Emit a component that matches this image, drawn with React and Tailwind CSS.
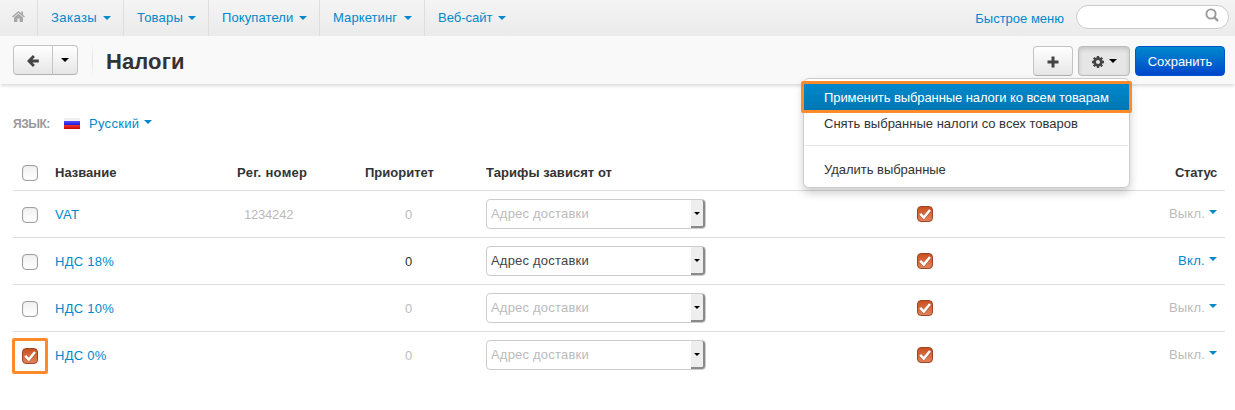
import React from "react";

const Caret = ({ className = "" }) => (
  <span className={`inline-block h-0 w-0 border-x-4 border-t-4 border-x-transparent ${className}`} />
);

const Check = ({ checked }) =>
  checked ? (
    <span className="flex h-4 w-4 items-center justify-center rounded-[4px] border border-[#9c4423] bg-gradient-to-b from-[#c9501f] to-[#e28259]">
      <svg viewBox="0 0 14 14" className="h-[14px] w-[14px]">
        <path d="M2.2 7.6 L5.8 11.4 L12 4" fill="none" stroke="#7c3517" strokeOpacity=".5" strokeWidth="2.3" />
        <path d="M2.2 6.9 L5.8 10.6 L12 3" fill="none" stroke="#fff" strokeWidth="2.5" />
      </svg>
    </span>
  ) : (
    <span className="block h-4 w-4 rounded-[4px] border border-[#a0a0a0] bg-gradient-to-b from-[#f1f1f1] to-white shadow-[inset_0_0_1px_rgba(0,0,0,0.3)]" />
  );

const nav = [
  ["Заказы", "w-[86px]", "tracking-[0.45px]"],
  ["Товары", "w-[85px]", "tracking-[0.2px]"],
  ["Покупатели", "w-[111px]", "tracking-[0.1px]"],
  ["Маркетинг", "w-[105px]", "tracking-[0.1px]"],
];

const rows = [
  { name: "VAT", reg: "1234242", off: true },
  { name: "НДС 18%", reg: "", off: false },
  { name: "НДС 10%", reg: "", off: true },
  { name: "НДС 0%", reg: "", off: true, checked: true },
];

const cols = "grid grid-cols-[42px_157px_120px_150px_265px_366px_1fr]";
const button = "flex items-center border border-[#c4c4c4] border-b-[#b0b0b0] bg-gradient-to-b from-white to-[#e6e6e6]";

export default function App() {
  return (
    <div className="relative h-[410px] w-[1235px] overflow-hidden bg-white font-['Liberation_Sans',Arial,sans-serif] text-[13px] leading-[18px] text-[#333]">
      <nav className="flex h-9 bg-gradient-to-b from-[#f4f4f4] to-[#ebebeb] text-[#0088cc]">
        <div className="flex w-[38px] border-r border-[#dedede] pl-3 pt-[11px]">
          <svg viewBox="0 0 13 11" className="h-[11px] w-[13px]" fill="#a7a7a7">
            <path d="M6.5 2.8 L11 6.5 V11 H7.6 V7.6 H5.4 V11 H2 V6.5Z" />
            <path d="M0.5 6 L6.5 1 L12.5 6" fill="none" stroke="#a7a7a7" strokeWidth="1.5" />
            <path d="M9.2 .6 H11 V5 L9.2 3.5Z" />
          </svg>
        </div>
        {nav.map(([label, w, ls]) => (
          <div key={label} className={`flex items-center justify-between border-r border-[#dedede] pl-[13px] pr-3 ${w}`}>
            <span className={ls}>{label}</span>
            <Caret className="border-t-[#0088cc]" />
          </div>
        ))}
        <div className="flex items-center pl-[13px]">
          <span className="w-[60px]">Веб-сайт</span>
          <Caret className="border-t-[#0088cc]" />
        </div>
        <div className="ml-auto flex pr-[6px] pt-[5px]">
          <span className="mr-3 pt-[5px]">Быстрое меню</span>
          <span className="flex h-6 w-[153px] justify-end rounded-full border border-[#ccc] bg-white pr-[9px] pt-[2px]">
            <svg viewBox="0 0 14 14" className="h-[14px] w-[14px]" fill="none" stroke="#999" strokeWidth="1.9">
              <circle cx="6" cy="6" r="4.6" />
              <path d="M9.4 9.4 L13 13" strokeWidth="2.3" />
            </svg>
          </span>
        </div>
      </nav>

      <header className="flex h-12 bg-[#f9f9f9] pl-[13px] pr-[10px] shadow-[0_3px_3px_-1px_rgba(0,0,0,0.15)]">
        <div className="mt-[9px] flex h-[30px]">
          <span className={`${button} w-10 justify-center rounded-l-[4px] pt-[2px]`}>
            <svg viewBox="0 0 12 12" className="h-3 w-3" fill="none" stroke="#444" strokeWidth="2.8">
              <path d="M11.8 6 H2.5 M6.9 1.1 L2 6 L6.9 10.9" />
            </svg>
          </span>
          <span className={`${button} -ml-px w-[26px] justify-center rounded-r-[4px]`}>
            <Caret className="border-t-black" />
          </span>
        </div>
        <span className="ml-[14px] mt-2 h-8 w-px bg-gradient-to-b from-[#f9f9f9] via-[#e2e2e2] to-[#f9f9f9]" />
        <h1 className="ml-[13px] mt-[11px] text-[22px] font-bold leading-[30px] tracking-[0.1px]">Налоги</h1>
        <div className="ml-auto mt-[10px] flex h-[30px] gap-[5px]">
          <span className={`${button} w-10 justify-center rounded-[4px]`}>
            <svg viewBox="0 0 12 12" className="mt-px h-3 w-3" stroke="#444" strokeWidth="3">
              <path d="M6 .5 V11.5 M.5 6 H11.5" />
            </svg>
          </span>
          <span className="flex w-[52px] items-center justify-center gap-[5px] rounded-[4px] border border-[#bbb] bg-[#e6e6e6] shadow-[inset_0_2px_4px_rgba(0,0,0,0.15)]">
            <svg viewBox="0 0 12 12" className="mt-0.5 h-3 w-3" fill="none" stroke="#444">
              <circle cx="6" cy="6" r="3.4" strokeWidth="2.7" />
              <path d="M6 0V2.5M6 9.5V12M0 6H2.5M9.5 6H12M1.8 1.8L3.4 3.4M8.6 8.6L10.2 10.2M10.2 1.8L8.6 3.4M3.4 8.6L1.8 10.2" strokeWidth="2.3" />
            </svg>
            <Caret className="border-t-black" />
          </span>
          <span className="flex w-[90px] items-center justify-center rounded-[4px] border border-[#0055cc] bg-gradient-to-b from-[#0088cc] to-[#0044cc] pt-0.5 text-white">
            Сохранить
          </span>
        </div>
      </header>

      <main className="px-[13px] pr-[10px]">
        <div className="flex h-[70px] items-center pt-[9px]">
          <span className="w-[51px] text-[12px] font-bold tracking-[-0.5px] text-[#999]">ЯЗЫК:</span>
          <span className="h-[11px] w-4 bg-[linear-gradient(#f0f0f0_0_3px,#5550ff_3px,#2018d8_7px,#f03838_7px,#cc0000)]" />
          <span className="ml-[9px] w-[55px] tracking-[0.3px] text-[#0088cc]">Русский</span>
          <Caret className="mb-[3px] border-t-[#0088cc]" />
        </div>

        <div className={`${cols} h-[37px] border-b border-[#ddd] font-bold`}>
          <span className="pl-[9px] pt-[11px]"><Check /></span>
          <span className="pt-[10px]">Название</span>
          <span className="whitespace-nowrap pl-[25px] pt-[10px] tracking-[0.3px]">Рег. номер</span>
          <span className="pl-[33px] pt-[10px]">Приоритет</span>
          <span className="pl-1 pt-[10px] tracking-[0.05px]">Тарифы зависят от</span>
          <span />
          <span className="pr-2 pt-[10px] text-right tracking-[-0.3px]">Статус</span>
        </div>

        {rows.map((r, i) => (
          <div key={r.name} className={`${cols} h-[47px] ${i < 3 ? "border-b border-[#ddd]" : ""} ${r.off ? "text-[#bbb]" : ""}`}>
            <span className="pl-[9px] pt-4"><Check checked={r.checked} /></span>
            <span className="pt-[15px] tracking-[0.25px] text-[#0088cc]">{r.name}</span>
            <span className="pl-8 pt-[15px] tracking-[-0.2px]">{r.reg}</span>
            <span className="pl-[73px] pt-[15px]">0</span>
            <span className="pl-1 pt-2">
              <span className="flex h-[30px] w-[220px] items-center rounded-[4px] border border-[#ccc] pl-1">
                <span className={`tracking-[0.2px] ${r.off ? "" : "text-[#444]"}`}>Адрес доставки</span>
                <span className="ml-auto flex h-[28px] w-[14px] items-center justify-center rounded-r-[3px] border-b-2 border-r-2 border-[#8a8a8a] bg-[#eee]">
                  <span className="h-0 w-0 border-x-[3px] border-t-[3px] border-x-transparent border-t-black" />
                </span>
              </span>
            </span>
            <span className="pl-[170px] pt-[15px]"><Check checked /></span>
            <span className="flex items-start justify-end gap-1 pr-2 pt-[14px]">
              <span className={r.off ? "tracking-[0.2px]" : "tracking-[0.3px] text-[#0088cc]"}>{r.off ? "Выкл." : "Вкл."}</span>
              <Caret className="mt-[5px] border-t-[#0088cc]" />
            </span>
          </div>
        ))}
      </main>

      <div className="absolute left-[803px] top-[78px] h-[110px] w-[327px] rounded-[6px] border border-[#ccc] bg-white pt-[5px] shadow-[0_5px_10px_rgba(0,0,0,0.2)]">
        <div className="flex h-[26px] items-center bg-gradient-to-b from-[#0088cc] to-[#0077b3] pl-5 pt-[2px] text-white">
          <span className="whitespace-nowrap tracking-[-0.09px]">Применить выбранные налоги ко всем товарам</span>
        </div>
        <div className="flex h-[26px] items-center pl-5 pt-[2px]">Снять выбранные налоги со всех товаров</div>
        <div className="mx-px mb-[11px] mt-[9px] h-px bg-[#e5e5e5]" />
        <div className="flex h-[26px] items-center pl-5 tracking-[-0.03px]">Удалить выбранные</div>
      </div>
      <div className="absolute left-[801px] top-[81px] h-8 w-[331px] rounded-[2px] border-[3px] border-[#ff8a28]" />
      <div className="absolute left-3 top-[338px] h-9 w-9 rounded-[2px] border-[3px] border-[#ff8a28]" />
    </div>
  );
}
